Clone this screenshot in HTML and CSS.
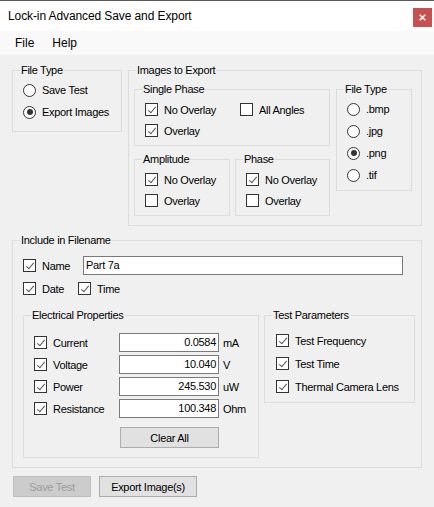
FILE: index.html
```html
<!DOCTYPE html>
<html>
<head>
<meta charset="utf-8">
<title>Lock-in Advanced Save and Export</title>
<link rel="stylesheet" href="styles.css">
</head>
<body>
<div class="window">
  <div class="titlebar">
    <span class="title">Lock-in Advanced Save and Export</span>
    <span class="close"><svg width="7" height="7" viewBox="0 0 7 7"><path d="M0.7 0.7 L6.3 6.3 M6.3 0.7 L0.7 6.3" stroke="#fff" stroke-width="1.6" fill="none"/></svg></span>
  </div>
  <div class="menubar">
    <span class="menu-item">File</span>
    <span class="menu-item">Help</span>
  </div>
  <div class="content">
    <div class="top-row">
      <fieldset class="group g-filetype">
        <legend>File Type</legend>
        <div class="body-filetype">
          <div class="opt"><span class="radio"></span><span>Save Test</span></div>
          <div class="opt"><span class="radio on"></span><span>Export Images</span></div>
        </div>
      </fieldset>
      <fieldset class="group g-images">
        <legend>Images to Export</legend>
        <div class="body-images">
          <div class="images-left">
            <fieldset class="group g-single">
              <legend>Single Phase</legend>
              <div class="body-single">
                <div class="chk"><span class="cb on"></span><span>No Overlay</span></div>
                <div class="chk"><span class="cb"></span><span>All Angles</span></div>
                <div class="chk"><span class="cb on"></span><span>Overlay</span></div>
              </div>
            </fieldset>
            <div class="amp-phase">
              <fieldset class="group g-amp">
                <legend>Amplitude</legend>
                <div class="body-small">
                  <div class="chk"><span class="cb on"></span><span>No Overlay</span></div>
                  <div class="chk"><span class="cb"></span><span>Overlay</span></div>
                </div>
              </fieldset>
              <fieldset class="group g-phase">
                <legend>Phase</legend>
                <div class="body-small">
                  <div class="chk"><span class="cb on"></span><span>No Overlay</span></div>
                  <div class="chk"><span class="cb"></span><span>Overlay</span></div>
                </div>
              </fieldset>
            </div>
          </div>
          <fieldset class="group g-ftype2">
            <legend>File Type</legend>
            <div class="body-ftype2">
              <div class="opt"><span class="radio"></span><span>.bmp</span></div>
              <div class="opt"><span class="radio"></span><span>.jpg</span></div>
              <div class="opt"><span class="radio on"></span><span>.png</span></div>
              <div class="opt"><span class="radio"></span><span>.tif</span></div>
            </div>
          </fieldset>
        </div>
      </fieldset>
    </div>

    <fieldset class="group g-include">
      <legend>Include in Filename</legend>
      <div class="body-include">
        <div class="name-row">
          <div class="chk name-check"><span class="cb on"></span><span>Name</span></div>
          <div class="text-input">Part 7a</div>
        </div>
        <div class="date-row">
          <div class="chk date-check"><span class="cb on"></span><span>Date</span></div>
          <div class="chk"><span class="cb on"></span><span>Time</span></div>
        </div>
        <div class="lower-row">
          <fieldset class="group g-elec">
            <legend>Electrical Properties</legend>
            <div class="body-elec">
              <div class="elec-grid">
                <div class="chk"><span class="cb on"></span><span>Current</span></div>
                <div class="num">0.0584</div>
                <div class="unit">mA</div>
                <div class="chk"><span class="cb on"></span><span>Voltage</span></div>
                <div class="num">10.040</div>
                <div class="unit">V</div>
                <div class="chk"><span class="cb on"></span><span>Power</span></div>
                <div class="num">245.530</div>
                <div class="unit">uW</div>
                <div class="chk"><span class="cb on"></span><span>Resistance</span></div>
                <div class="num">100.348</div>
                <div class="unit">Ohm</div>
              </div>
              <div class="btn btn-clear">Clear All</div>
            </div>
          </fieldset>
          <fieldset class="group g-test">
            <legend>Test Parameters</legend>
            <div class="body-test">
              <div class="chk"><span class="cb on"></span><span>Test Frequency</span></div>
              <div class="chk"><span class="cb on"></span><span>Test Time</span></div>
              <div class="chk"><span class="cb on"></span><span>Thermal Camera Lens</span></div>
            </div>
          </fieldset>
        </div>
      </div>
    </fieldset>

    <div class="buttons">
      <div class="btn btn-save">Save Test</div>
      <div class="btn btn-export">Export Image(s)</div>
    </div>
  </div>
</div>
</body>
</html>
```
FILE: styles.css
```css
html, body {
  margin: 0;
  padding: 0;
}
body {
  width: 434px;
  height: 507px;
  overflow: hidden;
  background: #f0f0f0;
  font-family: "Liberation Sans", Arial, sans-serif;
  font-size: 11px;
  letter-spacing: -0.3px;
  color: #000;
}
.window {
  border-top: 1px solid #5a5a5a;
}
.titlebar {
  height: 30px;
  background: #fff;
  display: flex;
  justify-content: space-between;
  align-items: flex-start;
  padding-left: 8px;
  padding-right: 2px;
}
.title {
  font-size: 12px;
  line-height: 30px;
  letter-spacing: -0.1px;
}
.close {
  width: 19px;
  height: 19px;
  margin-top: 7px;
  background: #c75050;
  display: flex;
  align-items: center;
  justify-content: center;
}
.menubar {
  height: 24px;
  background: #f9f9f9;
  display: flex;
  padding-left: 6px;
}
.menu-item {
  font-size: 12px;
  line-height: 24px;
  padding: 0 9px;
  letter-spacing: 0;
}
.content {
  padding: 9px 12px 0;
}
.top-row {
  display: flex;
  gap: 6px;
  align-items: flex-start;
}
.group {
  margin: 0;
  padding: 0;
  border: 1px solid #dcdcdc;
  min-width: 0;
  box-sizing: border-box;
}
.group > legend {
  padding: 0 1px;
  margin-left: 7px;
  line-height: 13px;
  height: 13px;
}
.opt {
  display: flex;
  align-items: center;
  gap: 6px;
  height: 22px;
}
.chk {
  display: flex;
  align-items: center;
  gap: 6px;
  height: 21px;
}
.radio {
  flex: none;
  width: 13px;
  height: 13px;
  box-sizing: border-box;
  border: 1px solid #333;
  border-radius: 50%;
  background: #fff;
  display: flex;
  align-items: center;
  justify-content: center;
}
.radio.on::after {
  content: "";
  width: 6px;
  height: 6px;
  border-radius: 50%;
  background: #333;
}
.cb {
  flex: none;
  position: relative;
  width: 13px;
  height: 13px;
  box-sizing: border-box;
  border: 1px solid #333;
  background: #fff;
}
.cb.on::after {
  content: "";
  position: absolute;
  left: 3.5px;
  top: 0.5px;
  width: 3px;
  height: 7px;
  border: solid #555;
  border-width: 0 1px 1px 0;
  transform: rotate(40deg);
}
.g-filetype {
  width: 110px;
}
.body-filetype {
  padding: 2px 0 8px 10px;
}
.g-images {
  width: 294px;
}
.body-images {
  display: flex;
  align-items: flex-start;
  gap: 6px;
  padding: 6px 9px 9px 5px;
}
.images-left {
  display: flex;
  flex-direction: column;
  gap: 7px;
}
.g-single {
  width: 196px;
}
.body-single {
  display: grid;
  grid-template-columns: 95px auto;
  grid-auto-rows: 21px;
  padding: 3px 0 4px 10px;
}
.amp-phase {
  display: flex;
  gap: 5px;
}
.g-amp {
  width: 96px;
}
.g-phase {
  width: 95px;
}
.body-small {
  padding: 3px 0 4px 10px;
}
.g-ftype2 {
  width: 76px;
}
.body-ftype2 {
  padding: 2px 0 4px 10px;
}
.g-include {
  width: 410px;
  margin-top: 8px;
}
.body-include {
  padding: 9px 6px 9px 10px;
}
.name-row {
  display: flex;
  align-items: center;
  height: 19px;
}
.name-check {
  width: 60px;
}
.text-input {
  width: 320px;
  height: 19px;
  box-sizing: border-box;
  border: 1px solid #7a7a7a;
  background: #fff;
  padding-left: 2px;
  line-height: 17px;
}
.date-row {
  display: flex;
  align-items: center;
  height: 21px;
  margin-top: 3px;
}
.date-check {
  width: 55px;
}
.lower-row {
  display: flex;
  gap: 5px;
  align-items: flex-start;
  margin-top: 10px;
}
.g-elec {
  width: 236px;
}
.body-elec {
  padding: 11px 0 9px 10px;
}
.elec-grid {
  display: grid;
  grid-template-columns: 85px 100px auto;
  row-gap: 3px;
  grid-auto-rows: 19px;
  align-items: center;
}
.unit {
  padding-left: 4px;
}
.num {
  height: 19px;
  box-sizing: border-box;
  border: 1px solid #7a7a7a;
  background: #fff;
  text-align: right;
  padding-right: 2px;
  line-height: 17px;
}
.btn {
  height: 21px;
  box-sizing: border-box;
  border: 1px solid #adadad;
  background: #e1e1e1;
  display: flex;
  align-items: center;
  justify-content: center;
}
.btn-clear {
  width: 99px;
  margin-top: 9px;
  margin-left: 86px;
}
.g-test {
  width: 151px;
}
.body-test {
  display: flex;
  flex-direction: column;
  gap: 2px;
  padding: 8px 0 5px 11px;
}
.buttons {
  display: flex;
  gap: 8px;
  margin-top: 8px;
  padding-left: 1px;
}
.btn-save {
  width: 78px;
  background: #cccccc;
  border-color: #bfbfbf;
  color: #9c9c9c;
}
.btn-export {
  width: 98px;
}
```
